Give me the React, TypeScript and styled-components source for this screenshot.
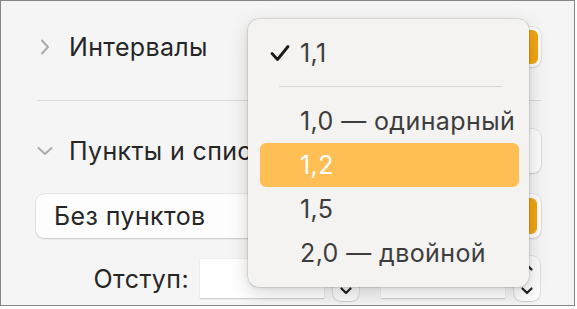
import React from "react";
import styled, { createGlobalStyle } from "styled-components";

const Global = createGlobalStyle`
  html, body { margin: 0; padding: 0; background: #ffffff; }
  body { font-family: Inter, "Noto Sans", "Liberation Sans", sans-serif; }
  * { box-sizing: border-box; }
`;

const Frame = styled.div`
  position: relative;
  width: 575px;
  height: 306px;
  border: 1px solid #858585;
  background: #f5f5f5;
  overflow: hidden;
`;

const Panel = styled.div`
  display: flex;
  flex-direction: column;
  padding: 0 33px 0 35px;
`;

const HeaderRow = styled.div<{ $top: number }>`
  display: flex;
  align-items: center;
  height: 44px;
  margin-top: ${(p) => p.$top}px;
`;

const ChevronSlot = styled.div`
  width: 33px;
  display: flex;
  align-items: center;
  justify-content: center;
  padding-right: 15px;
  color: #ababab;
`;

const Title = styled.span`
  font-size: 25px;
  letter-spacing: 0.35px;
  color: #262626;
  flex: 1;
  white-space: nowrap;
`;

const SidePopup = styled.div<{ $orange?: boolean }>`
  width: 160px;
  height: ${(p) => (p.$orange ? 40 : 44)}px;
  border-radius: 8px;
  background: #fcfcfc;
  box-shadow: 0 0 0 0.5px rgba(0, 0, 0, 0.12), 0 1px 2px rgba(0, 0, 0, 0.12);
  display: flex;
  justify-content: flex-end;
  padding: 3px;
`;

const OrangeCap = styled.div`
  width: 22px;
  border-radius: 6px;
  background: #f2a510;
`;

const Divider = styled.div`
  height: 1px;
  background: #d9d9d9;
  margin-top: 31px;
  margin-left: 1px;
`;

const WidePopup = styled.div`
  margin-top: 21px;
  height: 44px;
  border-radius: 8px;
  background: #fdfdfd;
  box-shadow: 0 0 0 0.5px rgba(0, 0, 0, 0.12), 0 1px 2px rgba(0, 0, 0, 0.14);
  display: flex;
  align-items: center;
  padding: 4px 4px 4px 18px;
`;

const PopupLabel = styled.span`
  flex: 1;
  font-size: 25px;
  letter-spacing: 0.4px;
  color: #262626;
`;

const IndentRow = styled.div`
  margin-top: 18px;
  height: 45px;
  display: flex;
  align-items: center;
`;

const IndentLabel = styled.span`
  width: 164px;
  text-align: right;
  padding-right: 11px;
  font-size: 25px;
  letter-spacing: 0.4px;
  color: #262626;
`;

const Field = styled.div`
  width: 124px;
  height: 40px;
  background: #ffffff;
  border-bottom: 1px solid #cfcfcf;
  box-shadow: 0 0 0 0.5px rgba(0, 0, 0, 0.06);
`;

const Stepper = styled.div<{ $gap: number }>`
  width: 26px;
  height: 45px;
  margin-left: 9px;
  margin-right: ${(p) => p.$gap}px;
  border-radius: 8px;
  background: #fbfbfb;
  box-shadow: 0 0 0 0.5px rgba(0, 0, 0, 0.12), 0 1px 2px rgba(0, 0, 0, 0.12);
  display: flex;
  flex-direction: column;
  align-items: center;
  justify-content: space-between;
  padding: 7px 0 6px;
  color: #222;
`;

const Menu = styled.div`
  position: absolute;
  left: 247px;
  top: 18px;
  width: 281px;
  padding: 12px 10px 12px 12px;
  border-radius: 11px;
  background: #f4f3f1;
  box-shadow: 0 0 0 0.5px rgba(0, 0, 0, 0.16), 0 6px 20px rgba(0, 0, 0, 0.16),
    0 1px 4px rgba(0, 0, 0, 0.08);
  display: flex;
  flex-direction: column;
`;

const Item = styled.div<{ $active?: boolean }>`
  height: 44px;
  border-radius: 6px;
  display: flex;
  align-items: center;
  padding-left: 10px;
  background: ${(p) => (p.$active ? "#ffbf55" : "transparent")};
  color: ${(p) => (p.$active ? "#ffffff" : "#3d3d3d")};
  font-size: 25px;
  letter-spacing: 0.4px;
  white-space: nowrap;
`;

const CheckSlot = styled.span`
  width: 30px;
  display: flex;
  align-items: center;
  color: #1a1a1a;
`;

const Separator = styled.div`
  height: 1px;
  background: #d6d5d3;
  margin: 11px 17px 12px 19px;
`;

const ChevronRight = () => (
  <svg width="10" height="16" viewBox="0 0 10 16">
    <polyline points="2,1.5 8,8 2,14.5" fill="none" stroke="currentColor" strokeWidth="2" strokeLinecap="round" strokeLinejoin="round" />
  </svg>
);

const ChevronDown = () => (
  <svg width="16" height="10" viewBox="0 0 16 10">
    <polyline points="1.5,2 8,8 14.5,2" fill="none" stroke="currentColor" strokeWidth="2" strokeLinecap="round" strokeLinejoin="round" />
  </svg>
);

const SmallChevron = ({ up }: { up?: boolean }) => (
  <svg width="12" height="8" viewBox="0 0 12 8">
    <polyline
      points={up ? "1.5,6.5 6,2 10.5,6.5" : "1.5,1.5 6,6 10.5,1.5"}
      fill="none"
      stroke="currentColor"
      strokeWidth="2.2"
      strokeLinecap="round"
      strokeLinejoin="round"
    />
  </svg>
);

const Check = () => (
  <svg width="20" height="18" viewBox="0 0 20 18">
    <polyline points="2,9.5 7.5,15.5 18,2.5" fill="none" stroke="currentColor" strokeWidth="2.8" strokeLinecap="round" strokeLinejoin="round" />
  </svg>
);

export default function App() {
  return (
    <>
      <Global />
      <Frame>
        <Panel>
          <HeaderRow $top={24}>
            <ChevronSlot>
              <ChevronRight />
            </ChevronSlot>
            <Title>Интервалы</Title>
            <SidePopup $orange>
              <OrangeCap />
            </SidePopup>
          </HeaderRow>
          <Divider />
          <HeaderRow $top={28}>
            <ChevronSlot>
              <ChevronDown />
            </ChevronSlot>
            <Title>Пункты и списки</Title>
            <SidePopup />
          </HeaderRow>
          <WidePopup>
            <PopupLabel>Без пунктов</PopupLabel>
            <OrangeCap style={{ alignSelf: "stretch" }} />
          </WidePopup>
          <IndentRow>
            <IndentLabel>Отступ:</IndentLabel>
            <Field />
            <Stepper $gap={22}>
              <SmallChevron up />
              <SmallChevron />
            </Stepper>
            <Field />
            <Stepper $gap={0}>
              <SmallChevron up />
              <SmallChevron />
            </Stepper>
          </IndentRow>
        </Panel>
        <Menu>
          <Item>
            <CheckSlot>
              <Check />
            </CheckSlot>
            1,1
          </Item>
          <Separator />
          <Item>
            <CheckSlot />
            1,0 — одинарный
          </Item>
          <Item $active>
            <CheckSlot />
            1,2
          </Item>
          <Item>
            <CheckSlot />
            1,5
          </Item>
          <Item>
            <CheckSlot />
            2,0 — двойной
          </Item>
        </Menu>
      </Frame>
    </>
  );
}
